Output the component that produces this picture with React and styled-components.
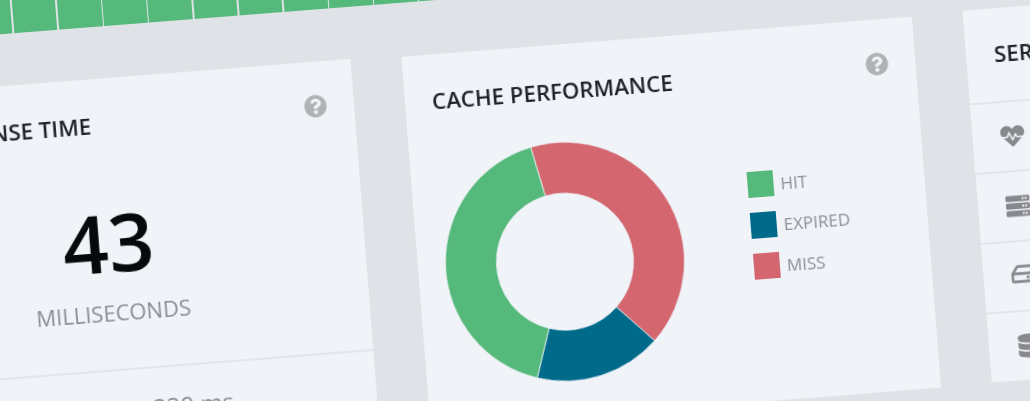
import React from 'react'
import styled, {createGlobalStyle} from 'styled-components'
import {FaQuestionCircle, FaHeartbeat, FaServer, FaRegHdd, FaDatabase} from 'react-icons/fa'

const colors = {green: '#55b97b', blue: '#006a8b', red: '#d3666f'}

const GlobalStyle = createGlobalStyle`
    html, body{
        margin: 0;
        padding: 0;
        background-color: #dfe2e6;
    }
`

const slices = [
    {color: colors.red, from: -12.2, to: 135.9},
    {color: colors.blue, from: 135.9, to: 197.9},
    {color: colors.green, from: 197.9, to: 347.8},
]

const legend = [
    {label: 'HIT', color: colors.green},
    {label: 'EXPIRED', color: colors.blue},
    {label: 'MISS', color: colors.red},
]

const point = (radius, angle) => {
    const rad = (angle - 90) * Math.PI / 180
    return `${120 + radius * Math.cos(rad)} ${120 + radius * Math.sin(rad)}`
}

const slicePath = ({from, to}) => {
    const big = to - from > 180 ? 1 : 0
    return `M${point(119.5, from)} A119.5 119.5 0 ${big} 1 ${point(119.5, to)} L${point(68.5, to)} A68.5 68.5 0 ${big} 0 ${point(68.5, from)} Z`
}

const Donut = () => (
    <DonutSvg viewBox='0 0 240 240'>
        {slices.map((slice) => (
            <path key={slice.color} d={slicePath(slice)} fill={slice.color} stroke='#f0f3f8' strokeWidth='0.8' />
        ))}
    </DonutSvg>
)

const App = () => {
    return (
        <>
            <GlobalStyle />
            <Viewport>
                <Stage>
                    <HeatBar>
                        {Array.from({length: 16}).map((_, index) => <HeatCell key={index} />)}
                    </HeatBar>
                    <Cards>
                        <Card>
                            <CardHead>
                                <Title>Avg Response Time</Title>
                                <HelpIcon />
                            </CardHead>
                            <Metric>
                                <BigNumber>43</BigNumber>
                                <Unit>Milliseconds</Unit>
                            </Metric>
                            <CardFoot>
                                <FootValue>220 ms</FootValue>
                            </CardFoot>
                        </Card>
                        <Card $drop={2}>
                            <CardHead>
                                <Title>Cache Performance</Title>
                                <HelpIcon />
                            </CardHead>
                            <ChartRow>
                                <Donut />
                                <Legend>
                                    {legend.map((item) => (
                                        <LegendItem key={item.label}>
                                            <Swatch $color={item.color} />
                                            <LegendLabel>{item.label}</LegendLabel>
                                        </LegendItem>
                                    ))}
                                </Legend>
                            </ChartRow>
                        </Card>
                        <ServiceCard>
                            <ServiceHead>
                                <Title>Services</Title>
                            </ServiceHead>
                            <ServiceRow><FaHeartbeat /></ServiceRow>
                            <ServiceRow><FaServer /></ServiceRow>
                            <ServiceRow $heavy><FaRegHdd /></ServiceRow>
                            <ServiceRow><FaDatabase /></ServiceRow>
                        </ServiceCard>
                    </Cards>
                </Stage>
            </Viewport>
        </>
    )
}

const Viewport = styled.div`
    width: 1030px;
    height: 401px;
    overflow: hidden;
    background-color: #dfe2e6;
    font-family: "Open Sans", "Liberation Sans", sans-serif;
`

const Stage = styled.div`
    width: 1400px;
    margin-left: -172px;
    transform-origin: 172px 0;
    transform: rotate(-4.5deg);
    filter: blur(0.7px);
`

const HeatBar = styled.div`
    display: flex;
    gap: 1.5px;
    height: 34px;
    margin-top: -60px;
    padding-top: 60px;
    margin-left: -2px;
    box-sizing: content-box;
`

const HeatCell = styled.div`
    width: 43.7px;
    flex: none;
    background-color: ${colors.green};
`

const Cards = styled.div`
    display: flex;
    align-items: flex-start;
    gap: 51px;
    margin-top: 52px;
`

const Card = styled.div`
    width: 512px;
    height: 372px;
    flex: none;
    margin-top: ${props => props.$drop || 0}px;
    background-color: #f0f3f8;
    display: flex;
    flex-direction: column;
`

const CardHead = styled.div`
    display: flex;
    align-items: center;
    justify-content: space-between;
    padding: 34px 27px 1px 27px;
    height: 24px;
`

const Title = styled.h3`
    margin: 0;
    font-size: 22.3px;
    font-weight: 600;
    color: #1f2227;
    text-transform: uppercase;
    white-space: nowrap;
`

const HelpIcon = styled(FaQuestionCircle)`
    width: 23px;
    height: 23px;
    color: #b0b2b6;
    margin-top: -4px;
`

const Metric = styled.div`
    display: flex;
    flex-direction: column;
    align-items: center;
    height: 232px;
    padding-top: 54px;
    box-sizing: border-box;
`

const BigNumber = styled.div`
    font-size: 80px;
    line-height: 100px;
    font-weight: 600;
    color: #08090b;
`

const Unit = styled.div`
    margin-top: 6px;
    font-size: 22px;
    line-height: 30px;
    color: #8a8d94;
    text-transform: uppercase;
`

const CardFoot = styled.div`
    border-top: 2px solid #e2e5ea;
    display: flex;
    padding: 24px 0 0 288px;
`

const FootValue = styled.div`
    font-size: 24px;
    line-height: 30px;
    color: #8a8d94;
`

const ChartRow = styled.div`
    display: flex;
    align-items: flex-start;
    padding: 38px 0 0 27px;
    gap: 68px;
`

const DonutSvg = styled.svg`
    width: 240px;
    height: 240px;
    flex: none;
`

const Legend = styled.div`
    display: flex;
    flex-direction: column;
    gap: 15px;
    padding-top: 45px;
`

const LegendItem = styled.div`
    display: flex;
    align-items: center;
    gap: 7px;
`

const Swatch = styled.span`
    width: 26px;
    height: 26px;
    background-color: ${props => props.$color};
`

const LegendLabel = styled.span`
    font-size: 17px;
    color: #8c8f96;
`

const ServiceCard = styled.div`
    width: 512px;
    flex: none;
    background-color: #f0f3f8;
`

const ServiceHead = styled.div`
    height: 93px;
    padding: 30px 0 0 28px;
    box-sizing: border-box;
`

const ServiceRow = styled.div`
    height: 70px;
    box-sizing: border-box;
    border-top: 2px solid #e2e5ea;
    padding-left: 28px;
    display: flex;
    align-items: center;
    color: #88898e;
    svg{
        width: ${props => props.$heavy ? 26 : 24}px;
        height: ${props => props.$heavy ? 26 : 24}px;
        stroke-width: ${props => props.$heavy ? 14 : 0}px;
        margin-top: ${props => props.$heavy ? -4 : 0}px;
    }
`

export default App
